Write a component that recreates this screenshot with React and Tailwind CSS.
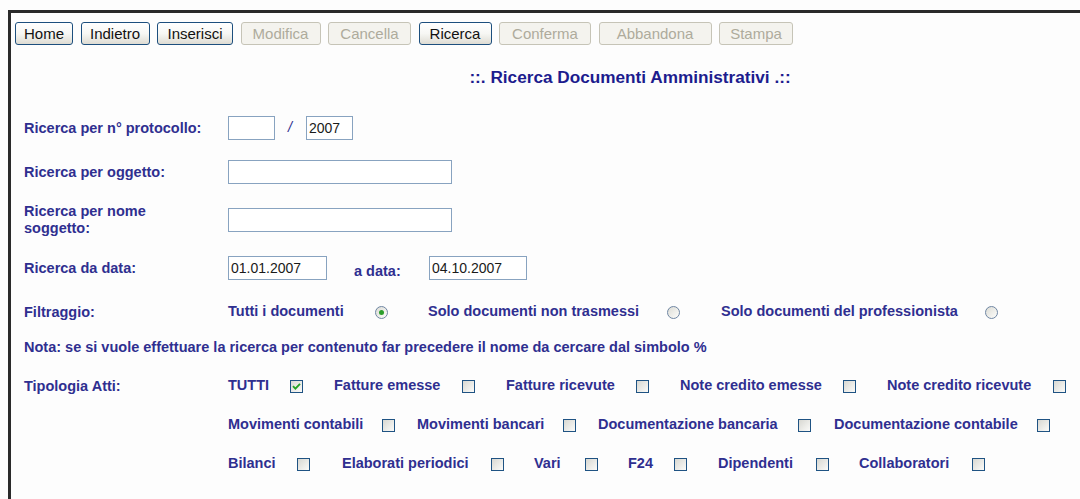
import React from "react";

const buttons = [
  { t: "Home", w: "w-[58px]", on: true },
  { t: "Indietro", w: "w-[69px]", on: true },
  { t: "Inserisci", w: "w-[76px]", on: true },
  { t: "Modifica", w: "w-[80px]" },
  { t: "Cancella", w: "w-[83px]" },
  { t: "Ricerca", w: "w-[73px]", on: true },
  { t: "Conferma", w: "w-[92px]" },
  { t: "Abbandona", w: "w-[113px]" },
  { t: "Stampa", w: "w-[74px]" },
];

const tipologia = [
  [
    { t: "TUTTI", lw: "w-[62px]", cw: "w-[44px]", checked: true },
    { t: "Fatture emesse", lw: "w-[128px]", cw: "w-[44px]" },
    { t: "Fatture ricevute", lw: "w-[130px]", cw: "w-[44px]" },
    { t: "Note credito emesse", lw: "w-[163px]", cw: "w-[44px]" },
    { t: "Note credito ricevute", lw: "w-[166px]", cw: "w-[44px]" },
  ],
  [
    { t: "Movimenti contabili", lw: "w-[154px]", cw: "w-[35px]" },
    { t: "Movimenti bancari", lw: "w-[146px]", cw: "w-[35px]" },
    { t: "Documentazione bancaria", lw: "w-[200px]", cw: "w-[36px]" },
    { t: "Documentazione contabile", lw: "w-[203px]", cw: "w-[36px]" },
  ],
  [
    { t: "Bilanci", lw: "w-[69px]", cw: "w-[45px]" },
    { t: "Elaborati periodici", lw: "w-[149px]", cw: "w-[43px]" },
    { t: "Vari", lw: "w-[51px]", cw: "w-[43px]" },
    { t: "F24", lw: "w-[46px]", cw: "w-[44px]" },
    { t: "Dipendenti", lw: "w-[98px]", cw: "w-[43px]" },
    { t: "Collaboratori", lw: "w-[113px]", cw: "w-[43px]" },
  ],
];

const rowHeights = ["h-[48px]", "h-[30px]", "h-[48px]"];

function Button({ t, w, on }) {
  return (
    <div
      className={`${w} h-[23px] shrink-0 flex items-center justify-center rounded-[3px] border text-[15px] leading-none ${
        on
          ? "border-[#1d4f7e] bg-linear-to-b from-white via-[#f7f7f4] to-[#dedcd3] text-[#111]"
          : "border-[#c6c4b7] bg-[#f4f3ee] text-[#aeab9c]"
      }`}
    >
      {t}
    </div>
  );
}

function Checkbox({ checked }) {
  return (
    <div className="w-[13px] h-[13px] shrink-0 border border-[#1f5383] bg-linear-to-br from-[#d8d8d2] to-[#fbfbf9] flex items-center justify-center">
      {checked && (
        <svg width="9" height="9" viewBox="0 0 9 9">
          <path d="M1 4.2 L3.4 6.6 L8 1.8" fill="none" stroke="#21a121" strokeWidth="1.8" />
        </svg>
      )}
    </div>
  );
}

function Radio({ checked }) {
  return (
    <div className="w-[13px] h-[13px] shrink-0 rounded-full border border-[#6f86a3] bg-linear-to-br from-[#dcdcd6] to-[#fdfdfb] flex items-center justify-center">
      {checked && <div className="w-[5px] h-[5px] rounded-full bg-[#2b9e2b]" />}
    </div>
  );
}

function Input({ w, value }) {
  return (
    <div
      className={`${w} h-[24px] shrink-0 border border-[#88a3c0] bg-white flex items-center pl-[2px] text-[14px] font-normal text-[#1a1a1a]`}
    >
      {value}
    </div>
  );
}

function Label({ children }) {
  return <div className="w-[204px] shrink-0 leading-[17px]">{children}</div>;
}

export default function App() {
  return (
    <div className="w-[1080px] h-[499px] overflow-hidden bg-[#fdfdfd] font-['Liberation_Sans',Arial,sans-serif]">
      <div className="mt-[10px] ml-[8px] w-[1300px] h-[600px] border-t-[3px] border-l-[3px] border-[#2a2a2a]">
        {/* toolbar */}
        <div className="flex gap-[7.5px] pt-[9px] pl-[4px]">
          {buttons.map((b) => (
            <Button key={b.t} {...b} />
          ))}
        </div>

        {/* heading */}
        <div className="mt-[22px] h-[20px] w-[1238px] text-center text-[17.2px] leading-[20px] font-bold text-[#1c1c8e]">
          ::. Ricerca Documenti Amministrativi .::
        </div>

        {/* search form */}
        <div className="mt-[19px] pl-[13px] text-[14.5px] font-bold text-[#2f2f90]">
          <div className="h-[44px] flex items-center">
            <Label>Ricerca per n° protocollo:</Label>
            <Input w="w-[47px]" value="" />
            <span className="w-[31px] shrink-0 pl-[13px] font-normal italic">/</span>
            <Input w="w-[47px]" value="2007" />
          </div>

          <div className="h-[44px] flex items-center">
            <Label>Ricerca per oggetto:</Label>
            <Input w="w-[224px]" value="" />
          </div>

          <div className="h-[52px] flex items-center">
            <Label>
              Ricerca per nome
              <br />
              soggetto:
            </Label>
            <Input w="w-[224px]" value="" />
          </div>

          <div className="h-[44px] flex items-center">
            <Label>Ricerca da data:</Label>
            <Input w="w-[99px]" value="01.01.2007" />
            <span className="w-[102px] shrink-0 pl-[27px] pt-[8px]">a data:</span>
            <Input w="w-[98px]" value="04.10.2007" />
          </div>

          <div className="h-[44px] flex items-center whitespace-nowrap">
            <Label>Filtraggio:</Label>
            <span className="w-[147px] shrink-0">Tutti i documenti</span>
            <div className="w-[53px] shrink-0">
              <Radio checked />
            </div>
            <span className="w-[239px] shrink-0">Solo documenti non trasmessi</span>
            <div className="w-[54px] shrink-0">
              <Radio />
            </div>
            <span className="w-[264px] shrink-0">Solo documenti del professionista</span>
            <Radio />
          </div>

          <div className="h-[28px] flex items-center whitespace-nowrap">
            Nota: se si vuole effettuare la ricerca per contenuto far precedere il nome da cercare dal simbolo %
          </div>

          {tipologia.map((row, i) => (
            <div key={i} className={`${rowHeights[i]} flex items-center whitespace-nowrap`}>
              <Label>{i === 0 ? "Tipologia Atti:" : ""}</Label>
              {row.map((it) => (
                <React.Fragment key={it.t}>
                  <span className={`${it.lw} shrink-0`}>{it.t}</span>
                  <div className={`${it.cw} shrink-0`}>
                    <Checkbox checked={it.checked} />
                  </div>
                </React.Fragment>
              ))}
            </div>
          ))}
        </div>
      </div>
    </div>
  );
}
